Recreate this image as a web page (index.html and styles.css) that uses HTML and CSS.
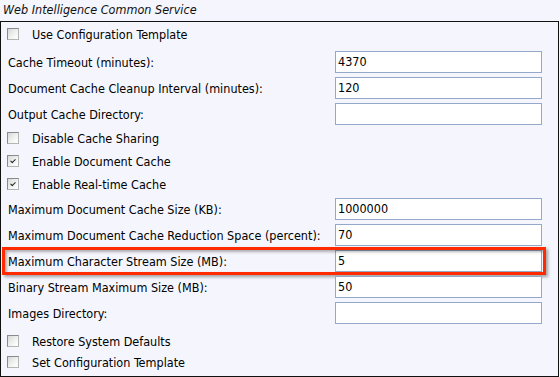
FILE: index.html
```html
<!DOCTYPE html>
<html>
<head>
<meta charset="utf-8">
<link rel="stylesheet" href="styles.css">
</head>
<body>
<div class="title">Web Intelligence Common Service</div>
<div class="box">
  <div class="cbrow first"><span class="cb"></span><span class="cbl">Use Configuration Template</span></div>
  <div class="row"><span class="lbl">Cache Timeout (minutes):</span><span class="inp">4370</span></div>
  <div class="row"><span class="lbl">Document Cache Cleanup Interval (minutes):</span><span class="inp">120</span></div>
  <div class="row"><span class="lbl">Output Cache Directory:</span><span class="inp"></span></div>
  <div class="cbrow"><span class="cb"></span><span class="cbl">Disable Cache Sharing</span></div>
  <div class="cbrow"><span class="cb checked"></span><span class="cbl">Enable Document Cache</span></div>
  <div class="cbrow"><span class="cb checked"></span><span class="cbl">Enable Real-time Cache</span></div>
  <div class="row"><span class="lbl">Maximum Document Cache Size (KB):</span><span class="inp">1000000</span></div>
  <div class="row"><span class="lbl">Maximum Document Cache Reduction Space (percent):</span><span class="inp">70</span></div>
  <div class="row hl"><span class="lbl">Maximum Character Stream Size (MB):</span><span class="inp">5</span><span class="mark"></span></div>
  <div class="row"><span class="lbl">Binary Stream Maximum Size (MB):</span><span class="inp">50</span></div>
  <div class="row"><span class="lbl">Images Directory:</span><span class="inp"></span></div>
  <div class="cbrow small gapt"><span class="cb"></span><span class="cbl">Restore System Defaults</span></div>
  <div class="cbrow small"><span class="cb"></span><span class="cbl">Set Configuration Template</span></div>
</div>
</body>
</html>
```
FILE: styles.css
```css
html, body {
  margin: 0;
  padding: 0;
  background: #f5f6fd;
}
body {
  font-family: "DejaVu Sans Condensed", "DejaVu Sans", sans-serif;
  font-size: 12.5px;
  color: #000;
  width: 560px;
  height: 377px;
  overflow: hidden;
}
.title {
  height: 21px;
  line-height: 20px;
  padding-left: 3px;
  font-style: italic;
  color: #111;
}
.box {
  width: 557px;
  border: 1px solid #111;
  padding-bottom: 3px;
}
.cbrow {
  display: flex;
  align-items: center;
  height: 23px;
  padding-left: 6px;
}
.cbrow.first {
  height: 27px;
  align-items: flex-start;
  padding-top: 7px;
  box-sizing: border-box;
}
.cbrow.first .cbl { margin-top: -2px; }
.cbrow.small { height: 21px; }
.cbrow.gapt { margin-top: 5px; }
.cb {
  width: 10px;
  height: 10px;
  border: 1px solid #8a8a8a;
  border-right-color: #b4b4b4;
  border-bottom-color: #b4b4b4;
  background: linear-gradient(135deg, #d8d8d8 0%, #f4f4f4 60%, #ffffff 100%);
  position: relative;
  flex: none;
  margin-top: -1px;
}
.cb.checked::after {
  content: "";
  position: absolute;
  left: 2px;
  top: 1px;
  width: 4px;
  height: 2px;
  border-left: 1.5px solid #222;
  border-bottom: 1.5px solid #222;
  transform: translate(0.5px, 2px) rotate(-45deg);
}
.cbl {
  margin-left: 13px;
}
.row {
  display: flex;
  align-items: center;
  height: 26px;
  padding-left: 7px;
  position: relative;
}
.lbl {
  width: 327px;
  flex: none;
}
.inp {
  width: 203px;
  height: 20px;
  line-height: 20px;
  border: 1px solid #94a9c9;
  background: #fff;
  padding-left: 2px;
  flex: none;
  box-sizing: content-box;
}
.mark {
  position: absolute;
  left: 1px;
  top: -1px;
  width: 538px;
  height: 22px;
  border: 3px solid #ff2a00;
  box-shadow: 2px 2px 3px rgba(0, 0, 0, 0.35), inset 2px 2px 3px rgba(0, 0, 0, 0.3);
  pointer-events: none;
}
```
